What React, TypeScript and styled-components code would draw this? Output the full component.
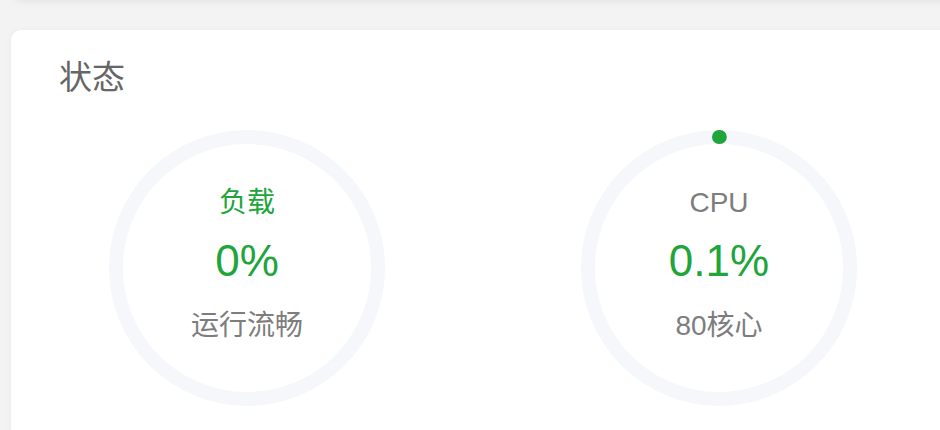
import styled, { createGlobalStyle } from 'styled-components';

const GlobalStyle = createGlobalStyle`
  html, body {
    margin: 0;
    padding: 0;
    background: #f3f3f3;
    overflow: hidden;
  }
  body {
    font-family: 'Liberation Sans', 'Noto Sans CJK SC', sans-serif;
  }
`;

const GREEN = '#20a53a';

const Page = styled.div`
  width: 940px;
  height: 430px;
  overflow: hidden;
`;

const PrevCard = styled.div`
  height: 40px;
  margin: -42px 0 0 12px;
  width: 960px;
  background: #fff;
  border-radius: 10px;
  box-shadow: 0 3px 8px rgba(0, 0, 0, 0.08);
`;

const Card = styled.section`
  margin: 32px 0 0 11px;
  width: 944px;
  background: #fff;
  border-radius: 10px;
  box-shadow: 0 1px 6px rgba(0, 0, 0, 0.05);
  padding: 30px 0 60px;
`;

const Title = styled.h2`
  margin: 0 0 0 48px;
  font-size: 33px;
  line-height: 36px;
  font-weight: 400;
  color: #666;
`;

const Row = styled.div`
  display: grid;
  grid-template-columns: 1fr 1fr;
  margin-top: 34px;
`;

const Gauge = styled.div`
  display: grid;
  justify-items: center;
  align-items: center;
  > * {
    grid-area: 1 / 1;
  }
`;

const Info = styled.div`
  display: flex;
  flex-direction: column;
  align-items: center;
  padding-bottom: 7px;
`;

const Label = styled.div<{ $accent?: boolean }>`
  font-size: 28px;
  line-height: 40px;
  color: ${(p) => (p.$accent ? GREEN : '#7d7d7d')};
`;

const Value = styled.div`
  font-size: 44px;
  line-height: 56px;
  color: ${GREEN};
  margin: 10px 0 17px;
`;

const Sub = styled.div`
  font-size: 28px;
  line-height: 40px;
  color: #7d7d7d;
`;

const SIZE = 276;
const STROKE = 14;
const R = (SIZE - STROKE) / 2;
const C = 2 * Math.PI * R;

const Ring = ({ percent }: { percent: number }) => (
  <svg width={SIZE} height={SIZE} viewBox={`0 0 ${SIZE} ${SIZE}`}>
    <circle cx={SIZE / 2} cy={SIZE / 2} r={R} fill="none" stroke="#f6f7fb" strokeWidth={STROKE} />
    {percent > 0 && (
      <circle
        cx={SIZE / 2}
        cy={SIZE / 2}
        r={R}
        fill="none"
        stroke={GREEN}
        strokeWidth={STROKE}
        strokeLinecap="round"
        strokeDasharray={`${(C * percent) / 100} ${C}`}
        transform={`rotate(-90 ${SIZE / 2} ${SIZE / 2})`}
      />
    )}
  </svg>
);

const gauges = [
  { label: '负载', accent: true, value: '0%', percent: 0, sub: '运行流畅' },
  { label: 'CPU', accent: false, value: '0.1%', percent: 0.1, sub: '80核心' },
];

const App = () => (
  <Page>
    <GlobalStyle />
    <PrevCard />
    <Card>
      <Title>状态</Title>
      <Row>
        {gauges.map((g) => (
          <Gauge key={g.label}>
            <Ring percent={g.percent} />
            <Info>
              <Label $accent={g.accent}>{g.label}</Label>
              <Value>{g.value}</Value>
              <Sub>{g.sub}</Sub>
            </Info>
          </Gauge>
        ))}
      </Row>
    </Card>
  </Page>
);

export default App;
